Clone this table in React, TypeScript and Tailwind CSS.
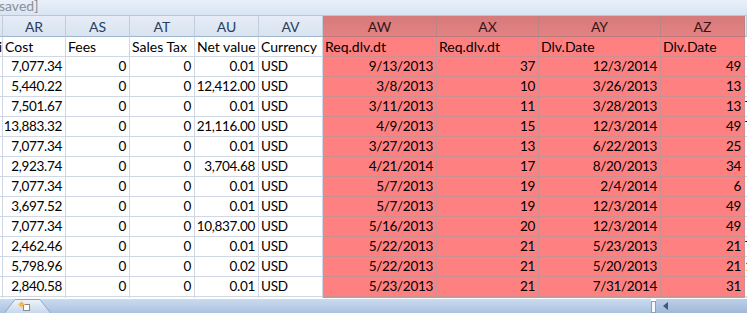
import React from "react";

type Col = {
  key: string;
  letter: string;
  name: string;
  width: string;
  red: boolean;
  align: "left" | "right";
};

const columns: Col[] = [
  { key: "aq", letter: "", name: "i", width: "w-[3px]", red: false, align: "right" },
  { key: "ar", letter: "AR", name: "Cost", width: "w-[63px]", red: false, align: "right" },
  { key: "as", letter: "AS", name: "Fees", width: "w-[64px]", red: false, align: "right" },
  { key: "at", letter: "AT", name: "Sales Tax", width: "w-[65px]", red: false, align: "right" },
  { key: "au", letter: "AU", name: "Net value", width: "w-[64px]", red: false, align: "right" },
  { key: "av", letter: "AV", name: "Currency", width: "w-[64px]", red: false, align: "left" },
  { key: "aw", letter: "AW", name: "Req.dlv.dt", width: "w-[114px]", red: true, align: "right" },
  { key: "ax", letter: "AX", name: "Req.dlv.dt", width: "w-[102px]", red: true, align: "right" },
  { key: "ay", letter: "AY", name: "Dlv.Date", width: "w-[122px]", red: true, align: "right" },
  { key: "az", letter: "AZ", name: "Dlv.Date", width: "w-[84px]", red: true, align: "right" },
  { key: "ba", letter: "", name: "", width: "w-[2px]", red: false, align: "left" },
];

const rows: string[][] = [
  ["", "7,077.34", "0", "0", "0.01", "USD", "9/13/2013", "37", "12/3/2014", "49", ""],
  ["", "5,440.22", "0", "0", "12,412.00", "USD", "3/8/2013", "10", "3/26/2013", "13", ""],
  ["", "7,501.67", "0", "0", "0.01", "USD", "3/11/2013", "11", "3/28/2013", "13", "T"],
  ["", "13,883.32", "0", "0", "21,116.00", "USD", "4/9/2013", "15", "12/3/2014", "49", "T"],
  ["", "7,077.34", "0", "0", "0.01", "USD", "3/27/2013", "13", "6/22/2013", "25", ""],
  ["", "2,923.74", "0", "0", "3,704.68", "USD", "4/21/2014", "17", "8/20/2013", "34", ""],
  ["", "7,077.34", "0", "0", "0.01", "USD", "5/7/2013", "19", "2/4/2014", "6", ""],
  ["", "3,697.52", "0", "0", "0.01", "USD", "5/7/2013", "19", "12/3/2014", "49", ""],
  ["", "7,077.34", "0", "0", "10,837.00", "USD", "5/16/2013", "20", "12/3/2014", "49", ""],
  ["", "2,462.46", "0", "0", "0.01", "USD", "5/22/2013", "21", "5/23/2013", "21", "T"],
  ["", "5,798.96", "0", "0", "0.02", "USD", "5/22/2013", "21", "5/20/2013", "21", "1"],
  ["", "2,840.58", "0", "0", "0.01", "USD", "5/23/2013", "21", "7/31/2014", "31", ""],
];

function HeaderRow() {
  return (
    <div className="flex h-[21px] shrink-0 text-[14px] tracking-normal">
      {columns.map((c) => (
        <div
          key={c.key}
          className={`${c.width} shrink-0 flex items-center justify-center pt-[1px] border-b border-r ${
            c.red
              ? "bg-gradient-to-b from-[#d67a7b] to-[#e48283] border-b-[#b87a7a] border-r-[#b98484] text-[#3a1414]"
              : "bg-gradient-to-b from-[#e6edf7] to-[#d9e3f0] border-b-[#9eb6ce] border-r-[#c0cddd] text-[#27405e]"
          }`}
        >
          {c.letter}
        </div>
      ))}
    </div>
  );
}

function Cell({ col, text, align }: { col: Col; text: string; align: "left" | "right" }) {
  const pad =
    col.key === "aq"
      ? "justify-end pr-0"
      : col.key === "ba"
        ? "justify-start pl-0"
        : align === "right"
          ? "justify-end pr-[3px]"
          : "justify-start pl-[2px]";
  return (
    <div
      className={`${col.width} ${pad} shrink-0 h-[20px] flex items-center pt-[1px] border-b overflow-hidden whitespace-nowrap ${
        col.key === "ba" ? "" : "border-r"
      } ${col.red ? "bg-[#ff8080] border-[#c99191]" : "bg-white border-[#d0d7e5]"}`}
    >
      {text}
    </div>
  );
}

function TabBar() {
  return (
    <div className="flex h-[15px] shrink-0 border-t border-white">
      <div className="w-[651px] shrink-0 bg-gradient-to-b from-[#cbdbef] to-[#aac2e0] flex">
        <svg width="56" height="14" viewBox="0 0 56 14" className="block">
          <defs>
            <linearGradient id="tabFill" x1="0" y1="0" x2="0" y2="1">
              <stop offset="0" stopColor="#eef4fb" />
              <stop offset="1" stopColor="#c6d6eb" />
            </linearGradient>
          </defs>
          <polygon points="4,14.5 15,0.5 40,0.5 51,14.5" fill="url(#tabFill)" stroke="#8ca7c9" strokeWidth="1" />
          <rect x="23.5" y="5.5" width="6" height="6" fill="#ffffff" stroke="#8a8a8a" strokeWidth="1" />
          <circle cx="21.5" cy="5.5" r="2.2" fill="#f6a52c" />
          <path d="M21.5 2 V9 M18 5.5 H25" stroke="#f9c35a" strokeWidth="0.8" />
        </svg>
      </div>
      <div className="w-[5px] shrink-0 mt-[2px] bg-[#f4f7fb] border border-[#8b9fb8]" />
      <div className="flex-1 bg-gradient-to-b from-[#bccfe7] to-[#a0b8d8] flex items-center pl-[7px]">
        <svg width="5" height="8" viewBox="0 0 5 8" className="block">
          <polygon points="5,0 0,4 5,8" fill="#3c5a80" />
        </svg>
      </div>
    </div>
  );
}

export default function App() {
  return (
    <div className="w-[747px] h-[313px] overflow-hidden bg-white flex flex-col font-['Lato',_'Liberation_Sans',_sans-serif] text-[13.5px] tracking-[-0.3px] leading-none text-black">
      <div className="h-[16px] shrink-0 border-b border-[#b3c7de] bg-gradient-to-b from-[#e9f0f9] to-[#d9e5f4] overflow-hidden">
        <div className="-mt-[1px] -ml-[1px] text-[14px] tracking-normal text-[#8a8f97] leading-[14px]">saved]</div>
      </div>
      <HeaderRow />
      <div className="flex shrink-0 text-[14px] tracking-normal">
        {columns.map((c) => (
          <Cell key={c.key} col={c} text={c.name} align={c.key === "aq" ? "right" : "left"} />
        ))}
      </div>
      {rows.map((r, i) => (
        <div key={i} className="flex shrink-0">
          {columns.map((c, j) => (
            <Cell key={c.key} col={c} text={r[j]} align={c.align} />
          ))}
        </div>
      ))}
      <div className="flex h-[1px] shrink-0">
        {columns.map((c) => (
          <div
            key={c.key}
            className={`${c.width} shrink-0 border-r ${
              c.red ? "bg-[#ff8080] border-[#c99191]" : "bg-white border-[#d0d7e5]"
            }`}
          />
        ))}
      </div>
      <TabBar />
    </div>
  );
}
